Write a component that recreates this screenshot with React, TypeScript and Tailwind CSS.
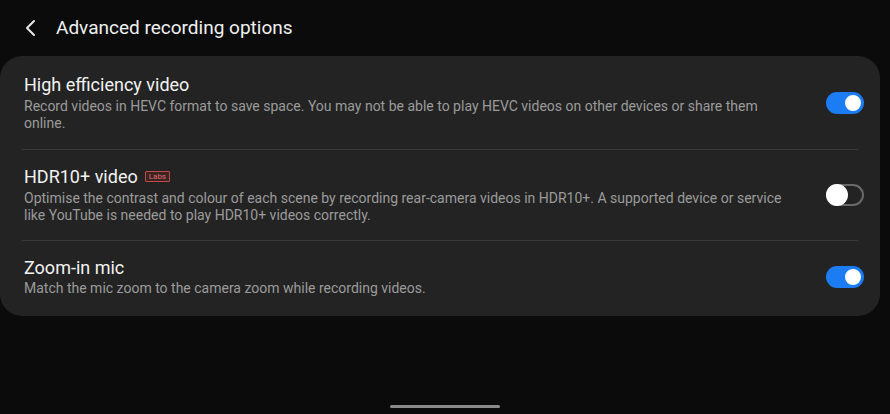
import React from "react";

function Toggle({ on }: { on: boolean }) {
  if (on) {
    return (
      <div className="relative w-[38px] h-[22px] rounded-full bg-[#1b7cf4] shrink-0">
        <div className="absolute right-[1px] top-[1px] w-[20px] h-[20px] rounded-full bg-white border-[2px] border-[#1b7cf4]" />
      </div>
    );
  }
  return (
    <div className="relative w-[38px] h-[22px] rounded-full border-[2px] border-[#6a6a6a] shrink-0">
      <div className="absolute left-[-2px] top-[-2px] w-[22px] h-[22px] rounded-full bg-white" />
    </div>
  );
}

function Row({
  title,
  desc,
  on,
  labs,
  className,
}: {
  title: string;
  desc: string;
  on: boolean;
  labs?: boolean;
  className: string;
}) {
  return (
    <div className={"flex items-center pl-6 pr-[16px] " + className}>
      <div className="flex-1 pr-[30px]">
        <div className="flex items-center h-[20px] text-[18px] text-[#f2f2f2]">
          <span>{title}</span>
          {labs && (
            <span className="ml-[7px] border border-[#c44a4a] bg-[#3a2424] text-[#e46a6a] text-[8px] leading-[9px] px-[3px] rounded-[1px]">
              Labs
            </span>
          )}
        </div>
        <div className="mt-[3px] text-[14px] leading-[17px] text-[#9b9b9b]">{desc}</div>
      </div>
      <Toggle on={on} />
    </div>
  );
}

export default function App() {
  return (
    <div
      className="w-[890px] h-[414px] bg-[#0b0b0b] flex flex-col overflow-hidden"
      style={{ fontFamily: "Roboto, 'Noto Sans', sans-serif" }}
    >
      <div className="h-[56px] flex items-center pl-[24px]">
        <svg width="14" height="18" viewBox="0 0 14 18" className="mr-[18px]">
          <path d="M10 2 L3 9 L10 16" stroke="#e8e8e8" strokeWidth="2" fill="none" strokeLinecap="round" strokeLinejoin="round" />
        </svg>
        <span className="text-[19px] text-[#f0f0f0]">Advanced recording options</span>
      </div>
      <div className="w-[880px] bg-[#232323] rounded-[22px] flex flex-col">
        <Row
          className="h-[93px] pt-[1px]"
          title="High efficiency video"
          desc="Record videos in HEVC format to save space. You may not be able to play HEVC videos on other devices or share them online."
          on={true}
        />
        <div className="mx-[22px] h-[1px] bg-[#393939]" />
        <Row
          className="h-[90px]"
          title="HDR10+ video"
          labs
          desc="Optimise the contrast and colour of each scene by recording rear-camera videos in HDR10+. A supported device or service like YouTube is needed to play HDR10+ videos correctly."
          on={false}
        />
        <div className="mx-[22px] h-[1px] bg-[#393939]" />
        <Row
          className="h-[75px] pb-[3px]"
          title="Zoom-in mic"
          desc="Match the mic zoom to the camera zoom while recording videos."
          on={true}
        />
      </div>
      <div className="flex-1 flex items-end justify-center pb-[6px]">
        <div className="w-[110px] h-[3px] rounded-full bg-[#8a8a8a]" />
      </div>
    </div>
  );
}
